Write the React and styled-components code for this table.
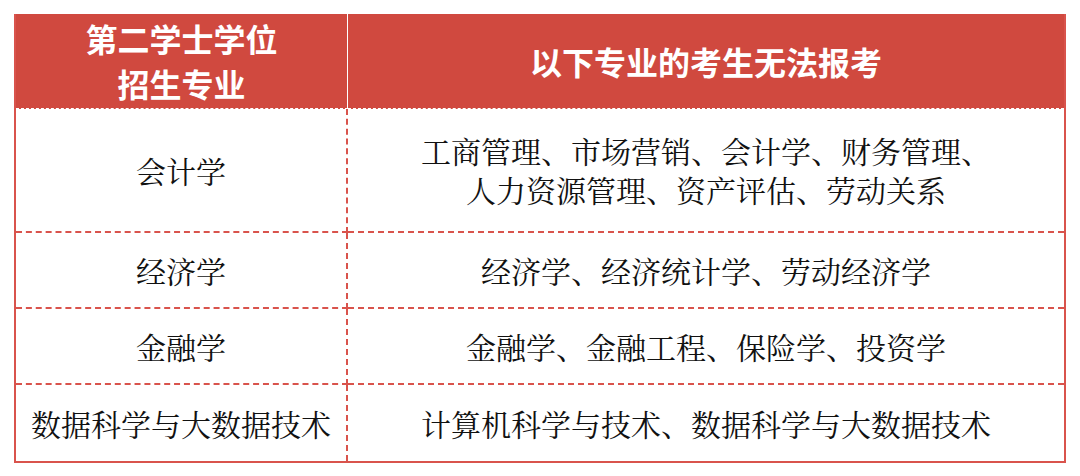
import React from "react";
import styled, { createGlobalStyle } from "styled-components";

const RED = "#D0493F";
const LINE = "#D9534C";

const Global = createGlobalStyle`
  html, body { margin: 0; padding: 0; background: #ffffff; }
  body { width: 1080px; height: 476px; overflow: hidden; }
`;

const Page = styled.div`
  padding: 14px 14px 0 14px;
  box-sizing: border-box;
  width: 1080px;
  height: 476px;
`;

const Table = styled.table`
  width: 1052px;
  border-spacing: 0;
  border-collapse: separate;
  border: 2px solid ${LINE};
  border-top: none;
  table-layout: fixed;
`;

const HeadCell = styled.th`
  background: ${RED};
  color: #ffffff;
  font-family: "Noto Sans CJK SC", "Noto Sans", sans-serif;
  font-weight: 700;
  font-size: 32px;
  line-height: 45px;
  height: 95px;
  padding: 0;
  box-sizing: border-box;
  text-align: center;
  vertical-align: middle;
  border-bottom: 1.5px dashed #ffffff;
  border-right: ${(p) => (p.$divider ? "1.5px solid #ffffff" : "none")};
`;

const Cell = styled.td`
  font-family: "Noto Serif CJK SC", "Noto Sans CJK SC", serif;
  font-weight: 400;
  font-size: 30px;
  line-height: 39px;
  color: #111111;
  text-align: center;
  vertical-align: middle;
  padding: 0 8px;
  height: ${(p) => p.$h}px;
  box-sizing: border-box;
  border-bottom: ${(p) => (p.$last ? "none" : `2px dashed ${LINE}`)};
  border-right: ${(p) => (p.$divider ? `2px dashed ${LINE}` : "none")};
  white-space: nowrap;
`;

const Line = styled.span`
  display: block;
`;

const rows = [
  { major: "会计学", lines: ["工商管理、市场营销、会计学、财务管理、", "人力资源管理、资产评估、劳动关系"], h: 124 },
  { major: "经济学", lines: ["经济学、经济统计学、劳动经济学"], h: 76 },
  { major: "金融学", lines: ["金融学、金融工程、保险学、投资学"], h: 76 },
  { major: "数据科学与大数据技术", lines: ["计算机科学与技术、数据科学与大数据技术"], h: 76 },
];

export default function App() {
  return (
    <Page>
      <Global />
      <Table>
        <colgroup>
          <col style={{ width: "332px" }} />
          <col />
        </colgroup>
        <thead>
          <tr>
            <HeadCell $divider>
              <Line>第二学士学位</Line>
              <Line>招生专业</Line>
            </HeadCell>
            <HeadCell>以下专业的考生无法报考</HeadCell>
          </tr>
        </thead>
        <tbody>
          {rows.map((r, i) => (
            <tr key={r.major}>
              <Cell $divider $h={r.h} $last={i === rows.length - 1}>
                {r.major}
              </Cell>
              <Cell $h={r.h} $last={i === rows.length - 1}>
                {r.lines.map((l, j) => (
                  <Line key={j}>{l}</Line>
                ))}
              </Cell>
            </tr>
          ))}
        </tbody>
      </Table>
    </Page>
  );
}
